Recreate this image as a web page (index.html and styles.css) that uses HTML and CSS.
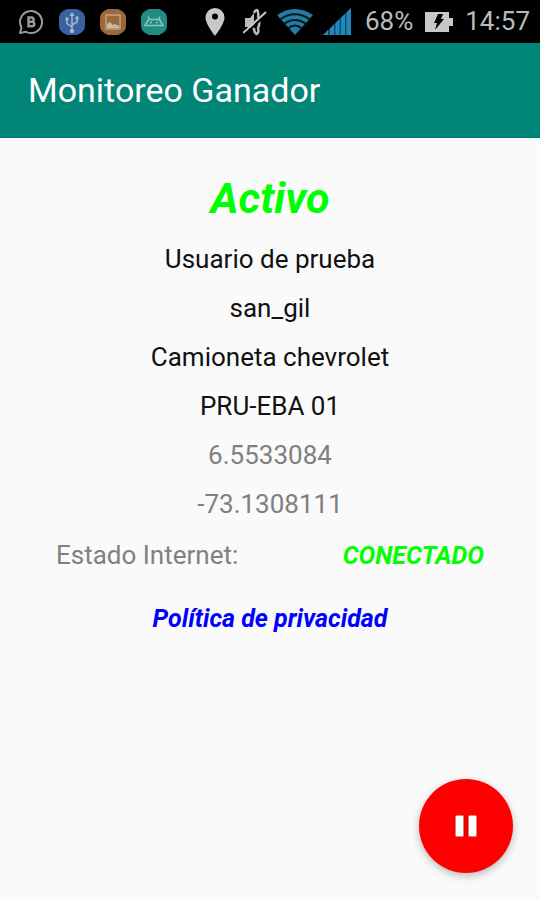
FILE: index.html
```html
<!DOCTYPE html>
<html lang="es">
<head>
    <meta charset="UTF-8">
    <meta name="viewport" content="width=device-width, initial-scale=1.0">
    <title>Monitoreo Ganador</title>
    <link rel="stylesheet" href="styles.css">
</head>
<body>
    <!-- Barra de estado -->
    <div class="status-bar">
        <div class="notificaciones">
            <svg width="26" height="26" viewBox="0 0 26 26">
                <path d="M3.500 18.500A11 11 0 1 1 8 22.800L2 24Z" fill="none" stroke="#999" stroke-width="2" stroke-linejoin="round"/>
                <path d="M10.500 8.500h3a2 2 0 0 1 0 4.200h-3zM10.500 12.700h3.500a2.200 2.200 0 0 1 0 4.500h-3.500z" fill="none" stroke="#999" stroke-width="2.500"/>
            </svg>
            <svg width="26" height="26" viewBox="0 0 26 26">
                <path d="M8 0h10q8 3 8 9v8q0 6-8 9H8q-8-3-8-9V9q0-6 8-9z" fill="#3a629f"/>
                <g fill="none" stroke="#a9b6cd" stroke-width="1.500">
                    <path d="M13 5v16M13 18l-5-3.500V10M13 16l5-3V9"/>
                </g>
                <path d="M13 3l2.500 4h-5zM6.500 8.500h3v3h-3z" fill="#a9b6cd"/>
                <circle cx="18" cy="9" r="1.700" fill="#a9b6cd"/>
                <circle cx="13" cy="22" r="2.200" fill="#a9b6cd"/>
            </svg>
            <svg width="26" height="26" viewBox="0 0 26 26">
                <path d="M8 0h10q8 3 8 9v8q0 6-8 9H8q-8-3-8-9V9q0-6 8-9z" fill="#9c6838"/>
                <rect x="6" y="6" width="14" height="14" fill="none" stroke="#b9a48e" stroke-width="1.500"/>
                <path d="M7 19v-4l3-2 3 3 2-1 4 2v2z" fill="#c9b9a8"/>
            </svg>
            <svg width="26" height="26" viewBox="0 0 26 26">
                <path d="M8 0h10q8 3 8 9v8q0 6-8 9H8q-8-3-8-9V9q0-6 8-9z" fill="#218c82"/>
                <path d="M4 16.500l3.500-6h11l3.500 6zM8.500 10.500L7 7.500M17.500 10.500L19 7.500" fill="none" stroke="#8fc4be" stroke-width="1.500"/>
                <path d="M9 13.500h2M15 13.500h2" stroke="#8fc4be" stroke-width="1.500"/>
            </svg>
        </div>
        <div class="sistema">
            <div class="iconos">
                <svg class="ubicacion" width="20" height="28" viewBox="0 0 20 28">
                    <path d="M10 0a9.500 9.500 0 0 0-9.500 9.500C.5 16 10 28 10 28s9.500-12 9.500-18.500A9.500 9.500 0 0 0 10 0zm0 5.500a3 3 0 0 1 0 6 3 3 0 0 1 0-6z" fill="#c8c8c8"/>
                </svg>
                <svg width="24" height="28" viewBox="0 0 24 28">
                    <path d="M2 10h5l4-5v17l-4-3H2z" fill="#bbb"/>
                    <path d="M11 5q1-3 3-3 2 2 1 8M11 20q0 5 3 6 2-1 1-6 2-4 1-8" fill="none" stroke="#bbb" stroke-width="2.500"/>
                    <path d="M2 26L24 6" stroke="#000" stroke-width="2"/>
                    <path d="M0 25L23 4" stroke="#c8c8c8" stroke-width="2"/>
                </svg>
                <svg width="36" height="28" viewBox="0 0 36 28">
                    <path d="M0 7Q18-5 36 7L18 27Z" fill="#257ca3"/>
                    <path d="M3 11.500Q18 1 33 11.500M7 16Q18 8 29 16M11 20.500Q18 14.500 25 20.500" fill="none" stroke="#021a26" stroke-width="2"/>
                </svg>
                <svg width="28" height="28" viewBox="0 0 28 28">
                    <path d="M0 27L28 0V27Z" fill="#0c4f70"/>
                    <path d="M0 27l5-5v5zM7 20.500l4-4V27H7zM12.500 15l4-4v16h-4zM18 9.800l4-4V27h-4zM23.500 4.500L28 0v27h-4.500z" fill="#2288b8"/>
                </svg>
            </div>
            <span class="bateria">68%</span>
            <svg width="28" height="20" viewBox="0 0 28 20">
                <path d="M0 0h24v6h4v8h-4v6H0z" fill="#c8c8c8"/>
                <path d="M13 2h5l-2 5h3L10 18l2-7H9z" fill="#000"/>
            </svg>
            <span class="hora">14:57</span>
        </div>
    </div>

    <header class="toolbar">
        <h1>Monitoreo Ganador</h1>
    </header>

    <!-- Datos del usuario y del vehículo -->
    <main class="contenido">
        <h2 class="estado">Activo</h2>
        <div class="datos">
            <p>Usuario de prueba</p>
            <p>san_gil</p>
            <p>Camioneta chevrolet</p>
            <p>PRU-EBA 01</p>
            <p class="gris">6.5533084</p>
            <p class="gris">-73.1308111</p>
        </div>
        <div class="internet">
            <span class="gris">Estado Internet:</span>
            <span class="conectado">CONECTADO</span>
        </div>
        <a class="politica" href="#">Política de privacidad</a>
    </main>

    <button class="fab" type="button" aria-label="Pausar">
        <svg width="22" height="22" viewBox="0 0 22 22">
            <path d="M0 0h9v22H0zM13 0h9v22h-9z" fill="#fff" stroke="#b00000" stroke-width="1"/>
        </svg>
    </button>
</body>
</html>
```
FILE: styles.css
```css
* {
    box-sizing: border-box;
}

body {
    margin: 0;
    min-height: 100vh;
    background-color: #fafafa;
    color: #111;
    font-family: Roboto, sans-serif;
    font-size: 26px;
    line-height: 33px;
}

h1, h2, p {
    margin: 0;
}

svg {
    display: block;
}

.status-bar {
    display: flex;
    justify-content: space-between;
    align-items: center;
    height: 43px;
    padding: 0 10px 0 18px;
    background: #000;
    color: #bbb;
}

.notificaciones {
    display: flex;
    gap: 15px;
}

.sistema {
    display: flex;
    align-items: center;
    gap: 12px;
}

.iconos {
    display: flex;
    gap: 10px;
    margin-right: 2px;
}

.ubicacion {
    margin-right: 8px;
}

.toolbar {
    display: flex;
    align-items: center;
    height: 95px;
    padding: 0 28px;
    background: #008577;
    border-bottom: 1px solid #00796c;
    color: #fff;
}

.toolbar h1 {
    font-size: 34px;
    font-weight: 400;
    line-height: 40px;
}

.contenido {
    display: flex;
    flex-direction: column;
    align-items: center;
    padding: 32px 56px;
}

.estado {
    color: #0f0;
    font-size: 43px;
    font-style: italic;
    font-weight: 700;
    line-height: 56px;
}

.datos {
    display: flex;
    flex-direction: column;
    gap: 16px;
    margin-top: 17px;
    text-align: center;
}

.gris {
    color: #808080;
}

.internet {
    display: flex;
    justify-content: space-between;
    width: 100%;
    margin-top: 18px;
}

.conectado, .politica {
    font-size: 25px;
    font-style: italic;
    font-weight: 700;
}

.conectado {
    color: #0f0;
}

.politica {
    margin-top: 30px;
    color: #00f;
    text-decoration: none;
}

.fab {
    position: fixed;
    right: 27px;
    bottom: 27px;
    display: flex;
    justify-content: center;
    align-items: center;
    width: 94px;
    height: 94px;
    padding: 0;
    border: none;
    border-radius: 50%;
    background: #f00;
    box-shadow: 0 3px 8px rgba(0,0,0,0.25);
    cursor: pointer;
}
```
